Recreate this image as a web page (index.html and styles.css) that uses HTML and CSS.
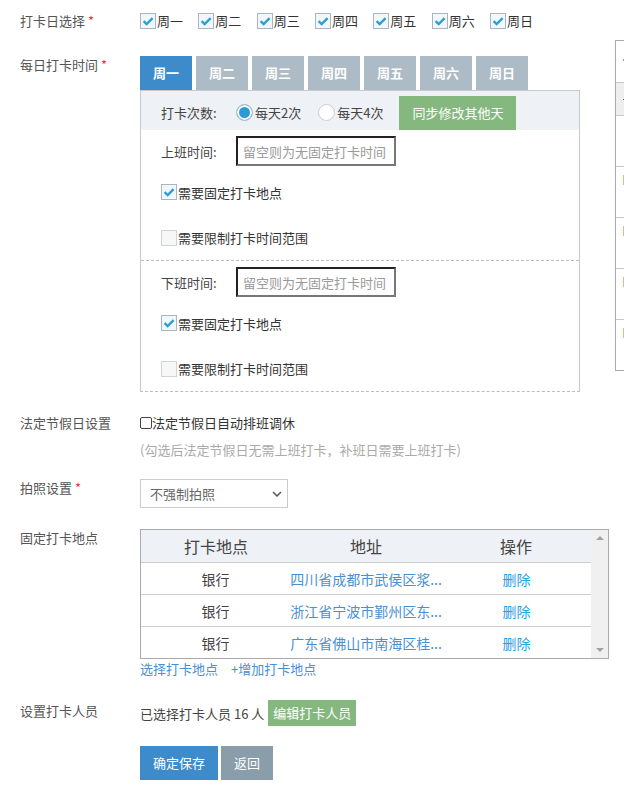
FILE: index.html
```html
<!DOCTYPE html>
<html lang="zh-CN">
<head>
<meta charset="utf-8">
<title>打卡规则设置</title>
<link rel="stylesheet" href="styles.css">
</head>
<body>
<div class="page">
  <div class="row row-days">
    <div class="label">打卡日选择 <span class="req">*</span></div>
    <div class="days">
      <span class="day"><span class="cb on"><svg viewBox="0 0 14 14"><path d="M2.6 7.1 L5.7 10.1 L11.6 4.1"/></svg></span>周一</span>
      <span class="day"><span class="cb on"><svg viewBox="0 0 14 14"><path d="M2.6 7.1 L5.7 10.1 L11.6 4.1"/></svg></span>周二</span>
      <span class="day"><span class="cb on"><svg viewBox="0 0 14 14"><path d="M2.6 7.1 L5.7 10.1 L11.6 4.1"/></svg></span>周三</span>
      <span class="day"><span class="cb on"><svg viewBox="0 0 14 14"><path d="M2.6 7.1 L5.7 10.1 L11.6 4.1"/></svg></span>周四</span>
      <span class="day"><span class="cb on"><svg viewBox="0 0 14 14"><path d="M2.6 7.1 L5.7 10.1 L11.6 4.1"/></svg></span>周五</span>
      <span class="day"><span class="cb on"><svg viewBox="0 0 14 14"><path d="M2.6 7.1 L5.7 10.1 L11.6 4.1"/></svg></span>周六</span>
      <span class="day"><span class="cb on"><svg viewBox="0 0 14 14"><path d="M2.6 7.1 L5.7 10.1 L11.6 4.1"/></svg></span>周日</span>
    </div>
  </div>

  <div class="row row-time">
    <div class="label">每日打卡时间 <span class="req">*</span></div>
    <div class="schedule">
      <div class="tabs">
        <span class="tab active">周一</span>
        <span class="tab">周二</span>
        <span class="tab">周三</span>
        <span class="tab">周四</span>
        <span class="tab">周五</span>
        <span class="tab">周六</span>
        <span class="tab">周日</span>
      </div>
      <div class="panel">
        <div class="panel-head">
          <span class="field-name">打卡次数:</span>
          <span class="radio on"></span><span class="radio-text">每天2次</span>
          <span class="radio"></span><span class="radio-text second">每天4次</span>
          <span class="btn btn-green btn-sync">同步修改其他天</span>
        </div>
        <div class="shift">
          <div class="shift-time"><span class="field-name">上班时间:</span><input class="time-input" type="text" placeholder="留空则为无固定打卡时间"></div>
          <div class="check-line first"><span class="cb on"><svg viewBox="0 0 14 14"><path d="M2.6 7.1 L5.7 10.1 L11.6 4.1"/></svg></span>需要固定打卡地点</div>
          <div class="check-line last"><span class="cb"></span>需要限制打卡时间范围</div>
        </div>
        <div class="shift shift-end">
          <div class="shift-time"><span class="field-name">下班时间:</span><input class="time-input" type="text" placeholder="留空则为无固定打卡时间"></div>
          <div class="check-line first"><span class="cb on"><svg viewBox="0 0 14 14"><path d="M2.6 7.1 L5.7 10.1 L11.6 4.1"/></svg></span>需要固定打卡地点</div>
          <div class="check-line last"><span class="cb"></span>需要限制打卡时间范围</div>
        </div>
      </div>
    </div>
  </div>

  <div class="row row-holiday">
    <div class="label">法定节假日设置</div>
    <div class="holiday">
      <div class="holiday-line"><span class="native-cb"></span>法定节假日自动排班调休</div>
      <div class="hint">(勾选后法定节假日无需上班打卡，补班日需要上班打卡)</div>
    </div>
  </div>

  <div class="row row-photo">
    <div class="label">拍照设置 <span class="req">*</span></div>
    <div class="select">
      <span>不强制拍照</span>
      <svg class="chev" viewBox="0 0 10 6"><polyline points="1,1 5,5 9,1"/></svg>
    </div>
  </div>

  <div class="row row-place">
    <div class="label">固定打卡地点</div>
    <div class="place">
      <div class="loc-table">
        <div class="loc-body">
          <div class="loc-row loc-head"><span>打卡地点</span><span>地址</span><span>操作</span></div>
          <div class="loc-row"><span>银行</span><span class="addr">四川省成都市武侯区浆...</span><span class="del">删除</span></div>
          <div class="loc-row"><span>银行</span><span class="addr">浙江省宁波市鄞州区东...</span><span class="del">删除</span></div>
          <div class="loc-row loc-last"><span>银行</span><span class="addr">广东省佛山市南海区桂...</span><span class="del">删除</span></div>
        </div>
        <div class="scroll"><span class="arr up"></span><span class="arr down"></span></div>
      </div>
      <div class="links"><span class="link">选择打卡地点</span><span class="link">+增加打卡地点</span></div>
    </div>
  </div>

  <div class="row row-people">
    <div class="label">设置打卡人员</div>
    <div class="people"><span>已选择打卡人员 16 人</span><span class="btn btn-green btn-edit">编辑打卡人员</span></div>
  </div>

  <div class="actions">
    <span class="btn btn-blue">确定保存</span>
    <span class="btn btn-gray">返回</span>
  </div>

  <div class="preview">
    <div class="pv-row pv-top"><span class="mk mk-gray"></span></div>
    <div class="pv-row pv-head"><span class="mk mk-dark"></span></div>
    <div class="pv-row pv-item"></div>
    <div class="pv-row pv-item"><span class="mk mk-orange"></span></div>
    <div class="pv-row pv-item"><span class="mk mk-orange"></span></div>
    <div class="pv-row pv-item"><span class="mk mk-orange"></span></div>
    <div class="pv-row pv-item pv-last"><span class="mk mk-orange"></span></div>
  </div>
</div>
</body>
</html>
```

FILE: styles.css
```css
html, body {
  margin: 0;
  padding: 0;
  overflow: hidden;
}
body {
  width: 624px;
  height: 789px;
  background: #fff;
  font-family: "Noto Sans CJK SC", "Noto Sans", sans-serif;
  font-size: 13px;
  color: #555;
}
.page {
  position: relative;
  padding: 10px 0 0 20px;
  height: 779px;
}
.row {
  display: flex;
  align-items: flex-start;
}
.label {
  width: 120px;
  flex: none;
  line-height: 18px;
  color: #555;
}
.req {
  color: #e8383d;
}

/* day checkboxes */
.row-days {
  height: 22px;
  align-items: center;
}
.days {
  display: flex;
}
.day {
  display: flex;
  align-items: center;
  width: 58.33px;
  line-height: 22px;
  color: #333;
}
.cb {
  width: 16px;
  height: 16px;
  box-sizing: border-box;
  border: 1px solid #cfd4d8;
  background: #f7f7f7;
  margin-right: 1px;
  display: inline-flex;
  flex: none;
}
.cb.on {
  border-color: #a9b6c1;
  background: #f2f7fb;
}
.cb svg {
  width: 14px;
  height: 14px;
}
.cb path {
  fill: none;
  stroke: #2a9fd8;
  stroke-width: 2.4;
}

/* daily time */
.row-time {
  margin-top: 24px;
}
.schedule {
  width: 440px;
}
.tabs {
  display: flex;
  gap: 4px;
  height: 34px;
}
.tab {
  width: 52px;
  height: 34px;
  line-height: 34px;
  text-align: center;
  color: #fff;
  font-weight: bold;
  background: #adbbc6;
}
.tab.active {
  background: #3e8bcc;
}
.panel {
  box-sizing: border-box;
  width: 440px;
  border: 1px solid #c9c9c9;
  border-bottom: 1px dashed #bdbdbd;
}
.panel-head {
  height: 35px;
  padding: 4px 0 0 20px;
  background: #eef1f5;
  display: flex;
  align-items: center;
  color: #444;
}
.field-name {
  width: 75px;
  flex: none;
  color: #444;
}
.radio {
  width: 17px;
  height: 17px;
  box-sizing: border-box;
  border-radius: 50%;
  border: 1px solid #c5cdd4;
  background: #fff;
  margin-right: 2px;
  flex: none;
}
.radio.on {
  border-color: #b1bec9;
  background: #2b9ad6;
  box-shadow: inset 0 0 0 2px #fff;
}
.radio-text {
  margin-right: 17px;
  color: #444;
}
.radio-text.second {
  margin-right: 16px;
}
.btn {
  display: inline-block;
  text-align: center;
  color: #fff;
}
.btn-green {
  background: #85b87f;
}
.btn-sync {
  width: 117px;
  height: 34px;
  line-height: 34px;
}
.shift {
  border-bottom: 1px dashed #bdbdbd;
  padding-top: 6px;
}
.shift.shift-end {
  border-bottom: none;
}
.shift-time {
  display: flex;
  align-items: center;
  height: 30px;
  padding-left: 20px;
}
.time-input {
  box-sizing: border-box;
  width: 160px;
  height: 30px;
  border: 2px solid;
  border-color: #222 #777 #777 #222;
  padding: 0 5px;
  margin: 0;
  font-family: inherit;
  font-size: 13px;
  background: #fff;
  outline: none;
}
.time-input::placeholder {
  color: #9a9a9a;
}
.check-line {
  display: flex;
  align-items: center;
  padding-left: 20px;
  height: 46px;
  color: #333;
}
.check-line.first {
  margin-top: 3px;
}
.check-line.last {
  height: 45px;
}

/* holiday */
.row-holiday {
  margin-top: 22px;
}
.holiday-line {
  display: flex;
  align-items: center;
  line-height: 18px;
  color: #333;
}
.native-cb {
  width: 12px;
  height: 12px;
  box-sizing: border-box;
  border: 1px solid #444;
  border-radius: 2px;
  background: #fff;
  flex: none;
}
.hint {
  margin-top: 9px;
  line-height: 18px;
  color: #aaa;
}

/* photo */
.row-photo {
  margin-top: 20px;
}
.select {
  box-sizing: border-box;
  width: 148px;
  height: 29px;
  border: 1px solid #ccc;
  display: flex;
  align-items: center;
  justify-content: space-between;
  padding: 0 5px 0 9px;
  color: #666;
}
.chev {
  width: 10px;
  height: 6px;
}
.chev polyline {
  fill: none;
  stroke: #555;
  stroke-width: 1.5;
}

/* places */
.row-place {
  margin-top: 21px;
}
.loc-table {
  box-sizing: border-box;
  width: 469px;
  height: 130px;
  border: 1px solid #aaa;
  display: flex;
}
.loc-body {
  flex: 1;
  overflow: hidden;
}
.loc-row {
  display: grid;
  grid-template-columns: 1fr 1fr 1fr;
  align-items: center;
  text-align: center;
  height: 31px;
  border-bottom: 1px solid #ccc;
  font-size: 14px;
  color: #444;
  white-space: nowrap;
}
.loc-row.loc-head {
  height: 32px;
  background: #eef1f5;
  font-size: 16px;
  color: #444;
}
.loc-row.loc-last {
  border-bottom: none;
}
.addr {
  color: #4a8fd1;
}
.del {
  color: #1ea2e4;
}
.scroll {
  width: 17px;
  background: #f0f0f0;
  display: flex;
  flex-direction: column;
  justify-content: space-between;
  align-items: center;
  padding: 6px 0;
  box-sizing: border-box;
}
.arr {
  width: 0;
  height: 0;
  border-left: 4px solid transparent;
  border-right: 4px solid transparent;
}
.arr.up {
  border-bottom: 4px solid #a3a3a3;
}
.arr.down {
  border-top: 4px solid #a3a3a3;
}
.links {
  margin-top: 1px;
  line-height: 18px;
  display: flex;
  gap: 13px;
}
.link {
  color: #4a8fd1;
}

/* people */
.row-people {
  margin-top: 22px;
  align-items: center;
}
.row-people .label {
  margin-top: -5px;
}
.people {
  display: flex;
  align-items: center;
  color: #444;
}
.btn-edit {
  width: 88px;
  height: 26px;
  line-height: 26px;
  margin-left: 4px;
}

/* actions */
.actions {
  margin-top: 20px;
  padding-left: 120px;
  display: flex;
  gap: 3px;
}
.btn-blue {
  width: 78px;
  height: 34px;
  line-height: 34px;
  background: #3e8bcc;
}
.btn-gray {
  width: 52px;
  height: 34px;
  line-height: 34px;
  background: #899dab;
}

/* right preview table, only its left edge is inside the window */
.preview {
  position: absolute;
  left: 615px;
  top: 40px;
  width: 9px;
  overflow: hidden;
  border: 1px solid #aaa;
  border-right: none;
  box-sizing: border-box;
}
.pv-row {
  border-bottom: 1px solid #c8c8c8;
  padding-left: 7px;
  box-sizing: border-box;
}
.pv-top {
  height: 42px;
  padding-top: 18px;
}
.pv-head {
  height: 33px;
  background: #eeeeee;
  padding-top: 16px;
}
.pv-item {
  height: 51px;
  padding-top: 8px;
}
.pv-last {
  border-bottom: none;
  height: 50px;
}
.mk {
  display: block;
  width: 2px;
}
.mk-gray {
  height: 2px;
  background: #999;
}
.mk-dark {
  height: 1px;
  background: #555;
}
.mk-orange {
  height: 10px;
  background: #f2b47c;
}
```
